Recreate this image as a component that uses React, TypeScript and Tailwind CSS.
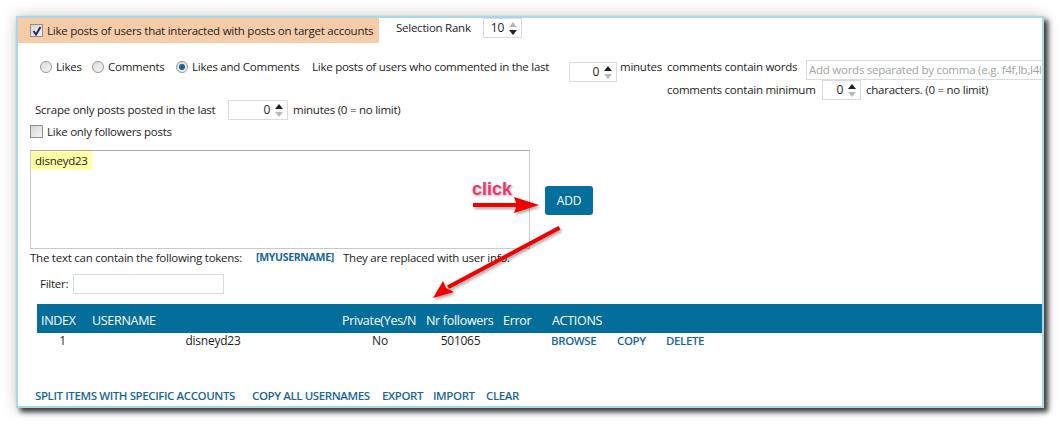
import React from "react"

function Spin({ value, w, upOn = true }: { value: string; w: string; upOn?: boolean }) {
  return (
    <div className={`flex shrink-0 items-center justify-end h-[20px] border border-[#d3dde3] bg-white pr-[4px] ${w}`}>
      <span className="text-[12px] text-[#1e1e1e] mr-[5px]">{value}</span>
      <div className="flex flex-col items-center gap-[3px]">
        <svg width="8" height="5" viewBox="0 0 8 5">
          <path d="M0 5 L4 0 L8 5 Z" fill={upOn ? "#222" : "#b9b9b9"} />
        </svg>
        <svg width="8" height="5" viewBox="0 0 8 5">
          <path d="M0 0 L4 5 L8 0 Z" fill={upOn ? "#b9b9b9" : "#222"} />
        </svg>
      </div>
    </div>
  )
}

function Check({ on }: { on?: boolean }) {
  return (
    <div className="w-[13px] h-[13px] shrink-0 border border-[#8e8f8f] bg-gradient-to-br from-[#d6d6d6] to-[#f4f4f4] flex items-center justify-center">
      {on && (
        <svg width="10" height="10" viewBox="0 0 10 10">
          <path d="M1.5 5 L4 8.5 L8.5 1" stroke="#28286a" strokeWidth="2" fill="none" />
        </svg>
      )}
    </div>
  )
}

function Radio({ on }: { on?: boolean }) {
  return (
    <div className="w-[12px] h-[12px] shrink-0 rounded-full border border-[#9a9a9a] bg-gradient-to-br from-[#dcdcdc] to-[#f6f6f6] flex items-center justify-center">
      {on && <div className="w-[6px] h-[6px] rounded-full bg-[#1c5f9e]" />}
    </div>
  )
}

const link = "font-semibold text-[#19679a] text-[11.5px] tracking-[-0.4px] whitespace-nowrap"

export default function App() {
  return (
    <div className="relative w-[1061px] h-[425px] bg-white overflow-hidden font-['Open_Sans',sans-serif] text-[#1e1e1e]">
      <div className="ml-[16px] mt-[16px] w-[1028px] h-[392px] border-2 border-[#a9d8e8] bg-white shadow-[4px_4px_5px_rgba(0,0,0,0.75),0_0_14px_rgba(0,0,0,0.22)] overflow-hidden text-[11.5px] tracking-[-0.25px]">
        {/* row 1 */}
        <div className="flex items-start">
          <div className="flex items-center w-[361px] h-[25px] bg-[#f8cca9] pl-[12px]">
            <Check on />
            <span className="ml-[4px] whitespace-nowrap">Like posts of users that interacted with posts on target accounts</span>
          </div>
          <span className="ml-[17px] mt-[1px] w-[87px] whitespace-nowrap">Selection Rank</span>
          <Spin value="10" w="w-[39px]" upOn={false} />
        </div>

        {/* row 2 / 3 */}
        <div className="flex items-start mt-[17px]">
          <div className="flex shrink-0 items-center h-[14px] pl-[22px]">
            <Radio />
            <span className="ml-[4px] w-[36px]">Likes</span>
            <Radio />
            <span className="ml-[4px] w-[68px]">Comments</span>
            <Radio on />
            <span className="ml-[4px] w-[120px] whitespace-nowrap">Likes and Comments</span>
            <span className="w-[257px] whitespace-nowrap">Like posts of users who commented in the last</span>
          </div>
          <div className="mt-[2px] shrink-0">
            <Spin value="0" w="w-[48px]" />
          </div>
          <span className="ml-[3px] w-[47px] shrink-0 leading-[14px] whitespace-nowrap">minutes</span>
          <div className="flex flex-col shrink-0">
            <div className="flex items-start">
              <span className="w-[139px] shrink-0 leading-[14px] whitespace-nowrap">comments contain words</span>
              <div className="h-[20px] w-[260px] shrink-0 border border-[#d3dde3] text-[#a3a3a3] pl-[2px] whitespace-nowrap overflow-hidden">
                Add words separated by comma (e.g. f4f,lb,l4l)
              </div>
            </div>
            <div className="flex items-center h-[20px]">
              <span className="w-[155px] shrink-0 whitespace-nowrap">comments contain minimum</span>
              <Spin value="0" w="w-[39px]" />
              <span className="ml-[5px] whitespace-nowrap">characters. (0 = no limit)</span>
            </div>
          </div>
        </div>

        {/* scrape row */}
        <div className="flex items-center h-[20px] pl-[17px]">
          <span className="w-[193px] whitespace-nowrap">Scrape only posts posted in the last</span>
          <Spin value="0" w="w-[60px]" />
          <span className="ml-[5px] whitespace-nowrap">minutes (0 = no limit)</span>
        </div>

        {/* followers checkbox */}
        <div className="flex items-center h-[13px] mt-[5px] pl-[12px]">
          <Check />
          <span className="ml-[4px] whitespace-nowrap">Like only followers posts</span>
        </div>

        {/* textarea + add */}
        <div className="flex items-start mt-[12px] pl-[12px]">
          <div className="w-[500px] h-[99px] border border-[#c9c9c9] border-t-[#a9a9a9] bg-white">
            <div className="inline-block bg-[#ffffa6] px-[4px] h-[19px] leading-[19px]">disneyd23</div>
          </div>
          <div className="ml-[15px] mt-[36px] w-[48px] h-[29px] rounded-[3px] bg-[#036f9c] text-white text-[12px] flex items-center justify-center">
            ADD
          </div>
        </div>

        {/* tokens */}
        <div className="flex items-center h-[18px] pl-[12px]">
          <span className="w-[226px] whitespace-nowrap">The text can contain the following tokens:</span>
          <span className="w-[87px] font-bold text-[#19679a] text-[10.5px] tracking-[-0.3px] whitespace-nowrap">[MYUSERNAME]</span>
          <span className="whitespace-nowrap">They are replaced with user info.</span>
        </div>

        {/* filter */}
        <div className="flex items-center h-[20px] mt-[7px] pl-[22px]">
          <span className="w-[33px]">Filter:</span>
          <div className="w-[151px] h-[20px] border border-[#d3dde3] bg-white" />
        </div>

        {/* table */}
        <div className="ml-[19px] mt-[10px]">
          <div className="flex items-center h-[29px] bg-[#046e9b] text-white text-[12.5px] tracking-[-0.3px] pt-[5px]">
            <span className="w-[51px] pl-[4px]">INDEX</span>
            <span className="w-[250px] pl-[4px]">USERNAME</span>
            <span className="w-[84px] pl-[4px] pr-[6px]">
              <span className="block overflow-hidden whitespace-nowrap">Private(Yes/No)</span>
            </span>
            <span className="w-[77px] pl-[4px] whitespace-nowrap">Nr followers</span>
            <span className="w-[49px] pl-[4px]">Error</span>
            <span className="pl-[4px]">ACTIONS</span>
          </div>
          <div className="flex items-center h-[16px] text-[12px]">
            <span className="w-[51px] text-center">1</span>
            <span className="w-[250px] text-center">disneyd23</span>
            <span className="w-[84px] text-center">No</span>
            <span className="w-[77px] text-center">501065</span>
            <span className="w-[49px]" />
            <span className={`${link} ml-[3px] w-[66px]`}>BROWSE</span>
            <span className={`${link} w-[49px]`}>COPY</span>
            <span className={link}>DELETE</span>
          </div>
        </div>

        {/* bottom links */}
        <div className="flex items-center h-[16px] mt-[39px] pl-[17px]">
          <span className={`${link} w-[217px]`}>SPLIT ITEMS WITH SPECIFIC ACCOUNTS</span>
          <span className={`${link} w-[130px]`}>COPY ALL USERNAMES</span>
          <span className={`${link} w-[51px]`}>EXPORT</span>
          <span className={`${link} w-[53px]`}>IMPORT</span>
          <span className={link}>CLEAR</span>
        </div>
      </div>

      {/* annotation overlay */}
      <span
        className="absolute left-[472px] top-[176px] text-[18px] font-bold text-[#f0336b] tracking-[0px] font-['Liberation_Sans',sans-serif]"
        style={{ textShadow: "0 0 2px #fff, 1px 1px 2px rgba(0,0,0,0.35)" }}
      >
        click
      </span>
      <svg className="absolute left-0 top-0 pointer-events-none" width="1061" height="425" viewBox="0 0 1061 425">
        <defs>
          <filter id="sh" x="-20%" y="-20%" width="140%" height="140%">
            <feDropShadow dx="1.5" dy="2" stdDeviation="1.5" floodColor="#000" floodOpacity="0.35" />
          </filter>
        </defs>
        <g filter="url(#sh)" fill="#f00000">
          <rect x="473" y="203" width="44" height="4" />
          <path d="M514 197 L539 205 L514 213 L517 205 Z" />
          <path d="M558.5 226 L560.5 229.5 L449 289 L447 285.5 Z" />
          <path d="M433 298 L443 281 L446 288 L454 292 Z" />
        </g>
      </svg>
    </div>
  )
}
